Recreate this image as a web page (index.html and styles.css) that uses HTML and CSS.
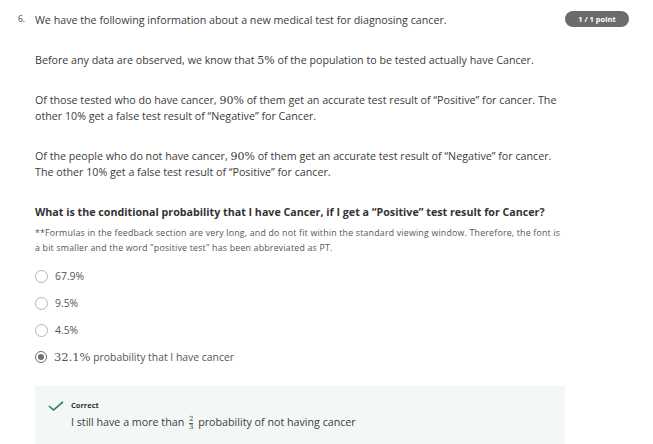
FILE: index.html
```html
<!DOCTYPE html>
<html>
<head>
<meta charset="utf-8">
<link rel="stylesheet" href="styles.css">
</head>
<body>
<div class="question">
  <div class="num">6.</div>
  <div class="content">
    <p>We have the following information about a new medical test for diagnosing cancer.</p>
    <p>Before any data are observed, we know that <span class="math">5%</span> of the population to be tested actually have Cancer.</p>
    <p>Of those tested who do have cancer, <span class="math">90%</span> of them get an accurate test result of “Positive” for cancer. The other 10% get a false test result of “Negative” for Cancer.</p>
    <p>Of the people who do not have cancer, <span class="math">90%</span> of them get an accurate test result of “Negative” for cancer. The other 10% get a false test result of “Positive” for cancer.</p>
    <p class="ask">What is the conditional probability that I have Cancer, if I get a “Positive” test result for Cancer?</p>
    <p class="note">**Formulas in the feedback section are very long, and do not fit within the standard viewing window. Therefore, the font is a bit smaller and the word "positive test" has been abbreviated as PT.</p>
    <div class="options">
      <div class="option"><span class="radio"></span><span>67.9%</span></div>
      <div class="option"><span class="radio"></span><span>9.5%</span></div>
      <div class="option"><span class="radio"></span><span>4.5%</span></div>
      <div class="option"><span class="radio checked"></span><span><span class="math big">32.1%</span> probability that I have cancer</span></div>
    </div>
    <div class="feedback">
      <svg class="check" width="16" height="10" viewBox="0 0 16 10"><path d="M1 5 L5.5 9 L15 0.8" fill="none" stroke="#1f8354" stroke-width="1.6"/></svg>
      <div class="fb-body">
        <div class="fb-title">Correct</div>
        <div class="fb-text">I still have a more than <span class="frac"><span>2</span><span>3</span></span> probability of not having cancer</div>
      </div>
    </div>
  </div>
  <div class="badge">1 / 1 point</div>
</div>
</body>
</html>
```

FILE: styles.css
```css
body {
  margin: 0;
  background: #fff;
  font-family: "Open Sans", "Liberation Sans", sans-serif;
  color: #3c3c3c;
}
.question {
  display: flex;
  align-items: flex-start;
  padding: 12px 0 0 18px;
}
.num {
  width: 17px;
  flex: none;
  font-size: 8.5px;
  line-height: 14px;
}
.content {
  width: 530px;
  flex: none;
  font-size: 10.7px;
  line-height: 16px;
}
.content p {
  margin: 0 0 24px 0;
}
.math {
  font-family: "DejaVu Serif", "Liberation Serif", serif;
  font-size: 11px;
  line-height: 1;
}
.math.big {
  font-size: 11.5px;
}
.content p.ask {
  font-weight: 700;
  font-size: 10.7px;
  color: #333;
  margin-bottom: 6px;
}
.content p.note {
  font-size: 8.8px;
  letter-spacing: 0.2px;
  line-height: 15px;
  color: #555;
  margin-bottom: 12px;
}
.options {
  display: flex;
  flex-direction: column;
  gap: 11px;
}
.option {
  display: flex;
  align-items: center;
  gap: 7px;
  color: #555;
  height: 16px;
  font-size: 10.4px;
}
.radio {
  width: 11px;
  height: 11px;
  border: 1px solid #b5b5b5;
  border-radius: 50%;
  flex: none;
  display: flex;
  align-items: center;
  justify-content: center;
}
.radio.checked {
  border: 1.5px solid #6f6f6f;
  width: 10px;
  height: 10px;
}
.radio.checked::after {
  content: "";
  width: 6px;
  height: 6px;
  border-radius: 50%;
  background: #6f6f6f;
}
.feedback {
  margin-top: 21px;
  background: #f3f8f6;
  display: flex;
  align-items: flex-start;
  padding: 13px 0 20px 13px;
  gap: 7px;
}
.check {
  margin-top: 2px;
  flex: none;
}
.fb-title {
  font-size: 7.5px;
  font-weight: 700;
  line-height: 12px;
  color: #333;
}
.fb-text {
  margin-top: 3px;
  line-height: 16px;
}
.frac {
  display: inline-flex;
  flex-direction: column;
  vertical-align: middle;
  font-family: "DejaVu Serif", "Liberation Serif", serif;
  font-size: 7px;
  line-height: 7px;
  text-align: center;
  margin: 0 2px;
}
.frac span:first-child {
  border-bottom: 0.8px solid #555;
}
.badge {
  margin-top: -1px;
  width: 64px;
  height: 16px;
  border-radius: 8px;
  background: #6b6b6b;
  color: #fff;
  font-size: 7.5px;
  font-weight: 700;
  line-height: 16px;
  text-align: center;
  flex: none;
}
```
